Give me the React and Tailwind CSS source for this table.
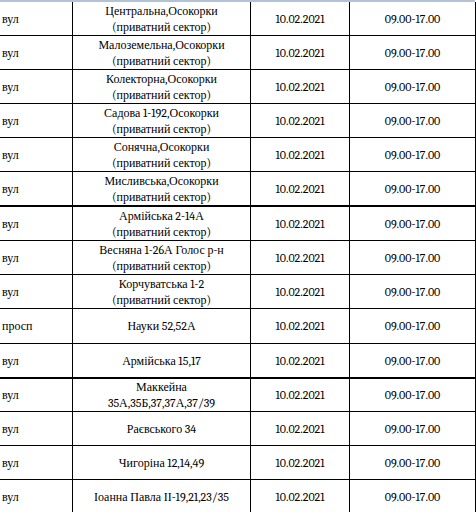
const rows = [
  { type: 'вул', name: ['Центральна,Осокорки', '(приватний сектор)'], cls: 'h-[34px] border-b' },
  { type: 'вул', name: ['Малоземельна,Осокорки', '(приватний сектор)'], cls: 'h-[34px] border-b' },
  { type: 'вул', name: ['Колекторна,Осокорки', '(приватний сектор)'], cls: 'h-[34px] border-b' },
  { type: 'вул', name: ['Садова 1-192,Осокорки', '(приватний сектор)'], cls: 'h-[34px] border-b' },
  { type: 'вул', name: ['Сонячна,Осокорки', '(приватний сектор)'], cls: 'h-[34px] border-b' },
  { type: 'вул', name: ['Мисливська,Осокорки', '(приватний сектор)'], cls: 'h-[35px] border-b-2' },
  { type: 'вул', name: ['Армійська 2-14А', '(приватний сектор)'], cls: 'h-[34px] border-b' },
  { type: 'вул', name: ['Весняна 1-26А Голос р-н', '(приватний сектор)'], cls: 'h-[34px] border-b' },
  { type: 'вул', name: ['Корчуватська 1-2', '(приватний сектор)'], cls: 'h-[34px] border-b' },
  { type: 'просп', name: ['Науки 52,52А'], cls: 'h-[35px] border-b' },
  { type: 'вул', name: ['Армійська 15,17'], cls: 'h-[35px] border-b-2' },
  { type: 'вул', name: ['Маккейна', '35А,35Б,37,37А,37/39'], cls: 'h-[33px] border-b' },
  { type: 'вул', name: ['Раєвського 34'], cls: 'h-[34px] border-b' },
  { type: 'вул', name: ['Чигоріна 12,14,49'], cls: 'h-[34px] border-b' },
  { type: 'вул', name: ['Іоанна Павла ІІ-19,21,23/35'], cls: 'h-[34px] border-b' },
];

const Row = ({ row }) => (
  <div className={`flex border-black ${row.cls}`}>
    <div className="w-[73px] shrink-0 border-r border-black flex items-center pl-[2px]">
      {row.type}
    </div>
    <div className="w-[178px] shrink-0 border-r border-black flex flex-col items-center justify-center text-center leading-[16px]">
      {row.name.map((line, i) => (
        <span key={i}>{line}</span>
      ))}
    </div>
    <div className="w-[99px] shrink-0 border-r border-black flex items-center justify-center">
      10.02.2021
    </div>
    <div className="w-[126px] shrink-0 border-r border-black flex items-center justify-center">
      09.00-17.00
    </div>
  </div>
);

export default function App() {
  return (
    <div className="w-[476px] h-[512px] overflow-hidden bg-white text-black text-[12px] font-serif [font-family:Liberation_Serif,Times_New_Roman,serif]">
      <div className="h-[2px] w-[475px] bg-[#b3c3d6]" />
      {rows.map((row, idx) => (
        <Row key={idx} row={row} />
      ))}
    </div>
  );
}
